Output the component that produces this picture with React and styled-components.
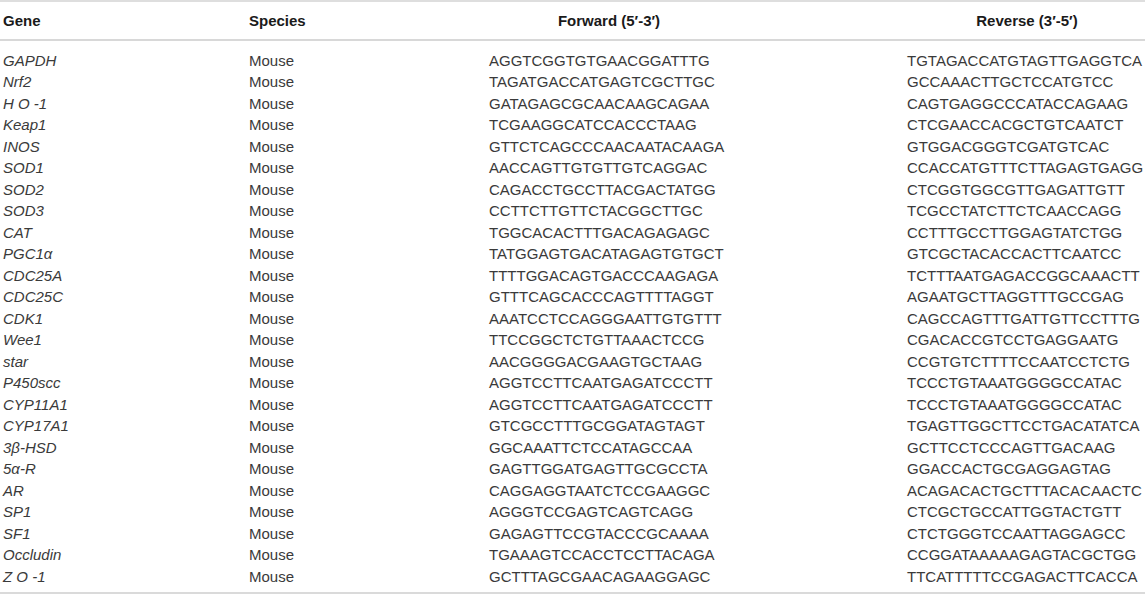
import styled, { createGlobalStyle } from 'styled-components';

const GlobalStyle = createGlobalStyle`
  html, body {
    margin: 0;
    padding: 0;
    background: #fff;
  }
  body {
    font-family: "Liberation Sans", Arial, Helvetica, sans-serif;
    font-size: 15px;
  }
`;

const COLUMNS = '246px 240px 418px 241px';

const Table = styled.div`
  width: 1145px;
  border-top: 2px solid #dedede;
  border-bottom: 2px solid #dadada;
  box-sizing: border-box;
`;

const HeadRow = styled.div`
  display: grid;
  grid-template-columns: ${COLUMNS};
  padding: 8px 0 7px;
  border-bottom: 2px solid #d8d8d8;
`;

const HeadCell = styled.div`
  padding-left: ${(p) => (p.$centered ? '0' : '3px')};
  width: ${(p) => (p.$centered ? '246px' : 'auto')};
  text-align: ${(p) => (p.$centered ? 'center' : 'left')};
  font-weight: bold;
  line-height: 21.5px;
  color: #1a1a1a;
  white-space: nowrap;
`;

const Body = styled.div`
  padding: 9px 0 5px;
`;

const Row = styled.div`
  display: grid;
  grid-template-columns: ${COLUMNS};
  line-height: 21.5px;
  height: 21.5px;
`;

const Cell = styled.div`
  padding-left: 3px;
  color: #3a3a3a;
  font-style: ${(p) => (p.$italic ? 'italic' : 'normal')};
  white-space: nowrap;
`;

const primers = [
  ['GAPDH', 'AGGTCGGTGTGAACGGATTTG', 'TGTAGACCATGTAGTTGAGGTCA'],
  ['Nrf2', 'TAGATGACCATGAGTCGCTTGC', 'GCCAAACTTGCTCCATGTCC'],
  ['H O -1', 'GATAGAGCGCAACAAGCAGAA', 'CAGTGAGGCCCATACCAGAAG'],
  ['Keap1', 'TCGAAGGCATCCACCCTAAG', 'CTCGAACCACGCTGTCAATCT'],
  ['INOS', 'GTTCTCAGCCCAACAATACAAGA', 'GTGGACGGGTCGATGTCAC'],
  ['SOD1', 'AACCAGTTGTGTTGTCAGGAC', 'CCACCATGTTTCTTAGAGTGAGG'],
  ['SOD2', 'CAGACCTGCCTTACGACTATGG', 'CTCGGTGGCGTTGAGATTGTT'],
  ['SOD3', 'CCTTCTTGTTCTACGGCTTGC', 'TCGCCTATCTTCTCAACCAGG'],
  ['CAT', 'TGGCACACTTTGACAGAGAGC', 'CCTTTGCCTTGGAGTATCTGG'],
  ['PGC1\u03b1', 'TATGGAGTGACATAGAGTGTGCT', 'GTCGCTACACCACTTCAATCC'],
  ['CDC25A', 'TTTTGGACAGTGACCCAAGAGA', 'TCTTTAATGAGACCGGCAAACTT'],
  ['CDC25C', 'GTTTCAGCACCCAGTTTTAGGT', 'AGAATGCTTAGGTTTGCCGAG'],
  ['CDK1', 'AAATCCTCCAGGGAATTGTGTTT', 'CAGCCAGTTTGATTGTTCCTTTG'],
  ['Wee1', 'TTCCGGCTCTGTTAAACTCCG', 'CGACACCGTCCTGAGGAATG'],
  ['star', 'AACGGGGACGAAGTGCTAAG', 'CCGTGTCTTTTCCAATCCTCTG'],
  ['P450scc', 'AGGTCCTTCAATGAGATCCCTT', 'TCCCTGTAAATGGGGCCATAC'],
  ['CYP11A1', 'AGGTCCTTCAATGAGATCCCTT', 'TCCCTGTAAATGGGGCCATAC'],
  ['CYP17A1', 'GTCGCCTTTGCGGATAGTAGT', 'TGAGTTGGCTTCCTGACATATCA'],
  ['3\u03b2-HSD', 'GGCAAATTCTCCATAGCCAA', 'GCTTCCTCCCAGTTGACAAG'],
  ['5\u03b1-R', 'GAGTTGGATGAGTTGCGCCTA', 'GGACCACTGCGAGGAGTAG'],
  ['AR', 'CAGGAGGTAATCTCCGAAGGC', 'ACAGACACTGCTTTACACAACTC'],
  ['SP1', 'AGGGTCCGAGTCAGTCAGG', 'CTCGCTGCCATTGGTACTGTT'],
  ['SF1', 'GAGAGTTCCGTACCCGCAAAA', 'CTCTGGGTCCAATTAGGAGCC'],
  ['Occludin', 'TGAAAGTCCACCTCCTTACAGA', 'CCGGATAAAAAGAGTACGCTGG'],
  ['Z O -1', 'GCTTTAGCGAACAGAAGGAGC', 'TTCATTTTTCCGAGACTTCACCA'],
];

const App = () => {
  return (
    <>
      <GlobalStyle />
      <Table>
        <HeadRow>
          <HeadCell>Gene</HeadCell>
          <HeadCell>Species</HeadCell>
          <HeadCell $centered>Forward (5′-3′)</HeadCell>
          <HeadCell $centered>Reverse (3′-5′)</HeadCell>
        </HeadRow>
        <Body>
          {primers.map(([gene, fwd, rev]) => (
            <Row key={gene}>
              <Cell $italic>{gene}</Cell>
              <Cell>Mouse</Cell>
              <Cell>{fwd}</Cell>
              <Cell>{rev}</Cell>
            </Row>
          ))}
        </Body>
      </Table>
    </>
  );
};

export default App;
